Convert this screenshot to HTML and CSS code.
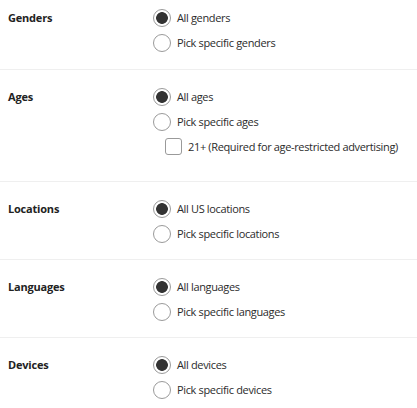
FILE: index.html
```html
<!DOCTYPE html>
<html lang="en">
<head>
    <meta charset="UTF-8">
    <meta name="viewport" content="width=device-width, initial-scale=1.0">
    <title>Targeting</title>
    <link rel="stylesheet" href="styles.css">
</head>
<body>
    <div class="targeting">
        <!-- Genders -->
        <section class="target-row first">
            <div class="target-label">Genders</div>
            <div class="target-options">
                <label class="option"><input type="radio" name="gender" checked><span>All genders</span></label>
                <label class="option"><input type="radio" name="gender"><span>Pick specific genders</span></label>
            </div>
        </section>

        <!-- Ages -->
        <section class="target-row">
            <div class="target-label">Ages</div>
            <div class="target-options">
                <label class="option"><input type="radio" name="age" checked><span>All ages</span></label>
                <label class="option"><input type="radio" name="age"><span>Pick specific ages</span></label>
                <label class="option sub-option"><input type="checkbox"><span>21+ (Required for age-restricted advertising)</span></label>
            </div>
        </section>

        <!-- Locations -->
        <section class="target-row">
            <div class="target-label">Locations</div>
            <div class="target-options">
                <label class="option"><input type="radio" name="location" checked><span>All US locations</span></label>
                <label class="option"><input type="radio" name="location"><span>Pick specific locations</span></label>
            </div>
        </section>

        <!-- Languages -->
        <section class="target-row">
            <div class="target-label">Languages</div>
            <div class="target-options">
                <label class="option"><input type="radio" name="language" checked><span>All languages</span></label>
                <label class="option"><input type="radio" name="language"><span>Pick specific languages</span></label>
            </div>
        </section>

        <!-- Devices -->
        <section class="target-row">
            <div class="target-label">Devices</div>
            <div class="target-options">
                <label class="option"><input type="radio" name="device" checked><span>All devices</span></label>
                <label class="option"><input type="radio" name="device"><span>Pick specific devices</span></label>
            </div>
        </section>
    </div>
</body>
</html>
```

FILE: styles.css
```css
* {
    margin: 0;
    padding: 0;
    box-sizing: border-box;
}

body {
    font-family: 'Open Sans', 'Noto Sans', sans-serif;
    background-color: #FFFFFF;
    color: #2b2b2b;
}

.targeting {
    display: flex;
    flex-direction: column;
}

.target-row {
    display: flex;
    padding: 14px 8px 13px;
    border-top: 1px solid #efefef;
}

.target-row.first {
    padding-top: 5px;
    padding-bottom: 14px;
    border-top: none;
}

.target-label {
    width: 145px;
    flex-shrink: 0;
    font-size: 11px;
    font-weight: 700;
    letter-spacing: -0.2px;
    line-height: 25px;
    color: #222;
}

.target-options {
    display: flex;
    flex-direction: column;
}

.option {
    display: flex;
    align-items: center;
    gap: 6px;
    height: 25px;
    font-size: 11px;
    letter-spacing: -0.35px;
    white-space: nowrap;
}

.option.sub-option {
    margin: 0 0 10px 12px;
    height: 24px;
}

.option input {
    appearance: none;
    -webkit-appearance: none;
    width: 18px;
    height: 18px;
    border: 1px solid #9a9a9a;
    border-radius: 50%;
    background: #fff;
    flex-shrink: 0;
}

.option input:checked {
    background: radial-gradient(circle, #333 0 5.5px, #fff 6.2px);
}

.option input[type="checkbox"] {
    width: 17px;
    height: 17px;
    border-radius: 3px;
}
```
